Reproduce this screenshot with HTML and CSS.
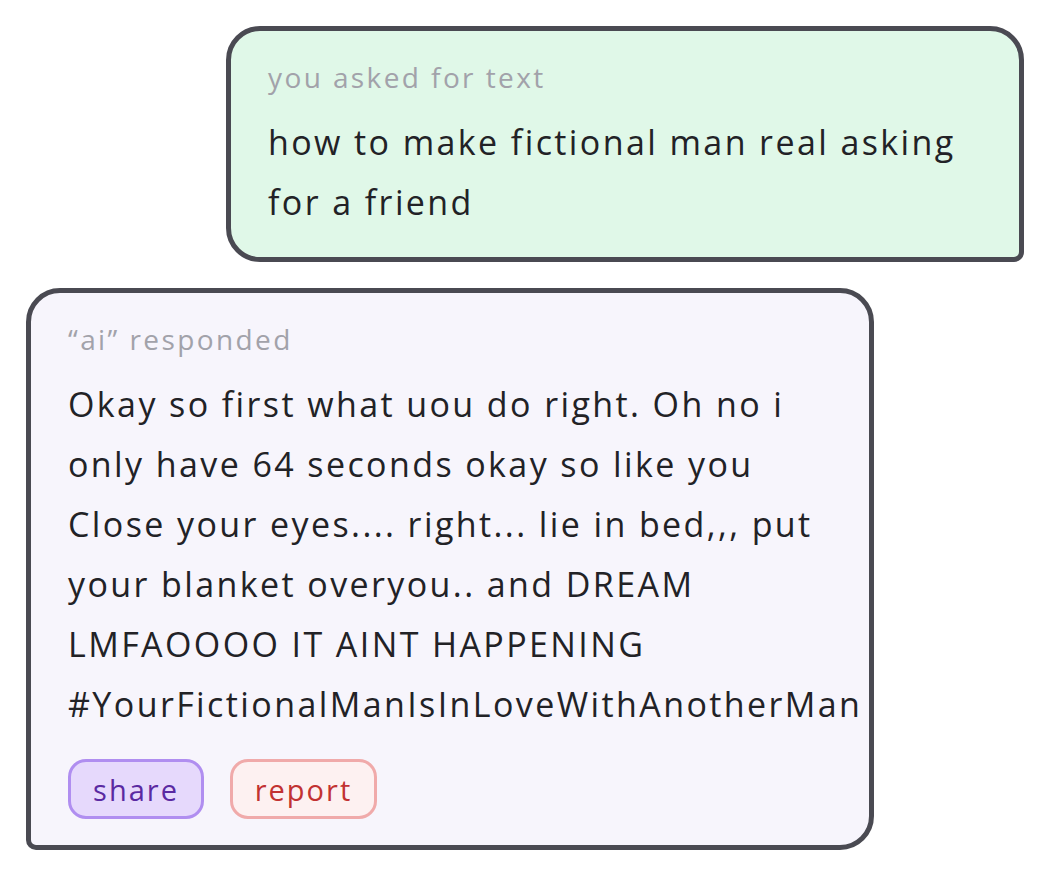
FILE: index.html
```html
<!DOCTYPE html>
<html>
<head>
<meta charset="utf-8">
<link rel="stylesheet" href="styles.css">
</head>
<body>
<div class="chat">
  <div class="bubble bubble-user">
    <div class="label">you asked for text</div>
    <div class="msg">how to make fictional man real asking<br>for a friend</div>
  </div>
  <div class="bubble bubble-ai">
    <div class="label">“ai” responded</div>
    <div class="msg">Okay so first what uou do right. Oh no i<br>only have 64 seconds okay so like you<br>Close your eyes.... right... lie in bed,,, put<br>your blanket overyou.. and DREAM<br>LMFAOOOO IT AINT HAPPENING<br>#YourFictionalManIsInLoveWithAnotherMan</div>
    <div class="actions">
      <button class="btn btn-share">share</button>
      <button class="btn btn-report">report</button>
    </div>
  </div>
</div>
</body>
</html>
```
FILE: styles.css
```css
html, body {
  margin: 0;
  padding: 0;
  background: #ffffff;
}
body {
  font-family: "Open Sans", "Noto Sans", sans-serif;
  color: #222226;
}
.chat {
  display: flex;
  flex-direction: column;
  padding: 26px 24px 0 26px;
  gap: 26px;
}
.bubble {
  border: 5px solid #4a4a52;
  box-sizing: border-box;
}
.bubble-user {
  align-self: flex-end;
  width: 798px;
  background: #e0f8e8;
  border-radius: 34px 34px 10px 34px;
  padding: 26px 30px 25px 37px;
}
.bubble-ai {
  align-self: flex-start;
  width: 848px;
  background: #f7f5fc;
  border-radius: 34px 34px 34px 10px;
  padding: 26px 0 26px 37px;
}
.label {
  font-size: 28px;
  line-height: 40px;
  letter-spacing: 2.4px;
  color: #a2a2aa;
  margin-bottom: 15px;
}
.msg {
  font-size: 34px;
  line-height: 60px;
  letter-spacing: 2.4px;
  color: #222226;
  white-space: nowrap;
}
.actions {
  display: flex;
  gap: 26px;
  margin-top: 25px;
}
.btn {
  font-family: inherit;
  font-size: 29px;
  letter-spacing: 2px;
  height: 60px;
  box-sizing: border-box;
  border-radius: 18px;
  border: 3px solid;
  padding: 0;
  line-height: 1;
}
.btn-share {
  width: 136px;
  background: #e6d9fc;
  border-color: #b08ef0;
  color: #5a2aa2;
}
.btn-report {
  width: 147px;
  background: #fdf1f1;
  border-color: #f0aaaa;
  color: #c23232;
}
```
